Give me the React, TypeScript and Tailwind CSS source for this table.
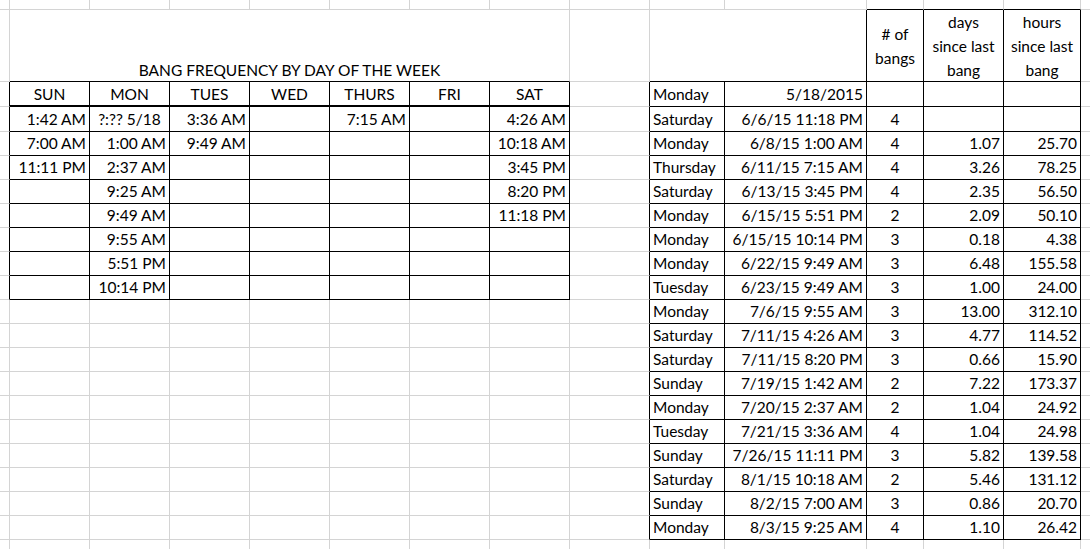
import React from "react";

type Align = "l" | "r" | "c";
type Content = { text: React.ReactNode; align: Align; span?: number; header?: boolean };

const NCOLS = 15;
const NROWS = 22;

const leftDays: string[][] = [
  ["1:42 AM", "7:00 AM", "11:11 PM"],
  ["?:?? 5/18", "1:00 AM", "2:37 AM", "9:25 AM", "9:49 AM", "9:55 AM", "5:51 PM", "10:14 PM"],
  ["3:36 AM", "9:49 AM"],
  [],
  ["7:15 AM"],
  [],
  ["4:26 AM", "10:18 AM", "3:45 PM", "8:20 PM", "11:18 PM"],
];
const dayHeads = ["SUN", "MON", "TUES", "WED", "THURS", "FRI", "SAT"];

const rightRows: string[][] = [
  ["Saturday", "6/6/15 11:18 PM", "4", "", ""],
  ["Monday", "6/8/15 1:00 AM", "4", "1.07", "25.70"],
  ["Thursday", "6/11/15 7:15 AM", "4", "3.26", "78.25"],
  ["Saturday", "6/13/15 3:45 PM", "4", "2.35", "56.50"],
  ["Monday", "6/15/15 5:51 PM", "2", "2.09", "50.10"],
  ["Monday", "6/15/15 10:14 PM", "3", "0.18", "4.38"],
  ["Monday", "6/22/15 9:49 AM", "3", "6.48", "155.58"],
  ["Tuesday", "6/23/15 9:49 AM", "3", "1.00", "24.00"],
  ["Monday", "7/6/15 9:55 AM", "3", "13.00", "312.10"],
  ["Saturday", "7/11/15 4:26 AM", "3", "4.77", "114.52"],
  ["Saturday", "7/11/15 8:20 PM", "3", "0.66", "15.90"],
  ["Sunday", "7/19/15 1:42 AM", "2", "7.22", "173.37"],
  ["Monday", "7/20/15 2:37 AM", "2", "1.04", "24.92"],
  ["Tuesday", "7/21/15 3:36 AM", "4", "1.04", "24.98"],
  ["Sunday", "7/26/15 11:11 PM", "3", "5.82", "139.58"],
  ["Saturday", "8/1/15 10:18 AM", "2", "5.46", "131.12"],
  ["Sunday", "8/2/15 7:00 AM", "3", "0.86", "20.70"],
  ["Monday", "8/3/15 9:25 AM", "4", "1.10", "26.42"],
];

function buildContent(): (Content | null | undefined)[][] {
  const m: (Content | null | undefined)[][] = Array.from({ length: NROWS }, () =>
    Array.from({ length: NCOLS }, () => undefined)
  );
  m[1][1] = { text: "BANG FREQUENCY BY DAY OF THE WEEK", align: "c", span: 7 };
  for (let c = 2; c <= 7; c++) m[1][c] = null;
  m[1][9] = { text: "", align: "l", span: 2 };
  m[1][10] = null;
  m[1][11] = { text: <>#&nbsp;of<br />bangs</>, align: "c", header: true };
  m[1][12] = { text: <>days<br />since last<br />bang</>, align: "c", header: true };
  m[1][13] = { text: <>hours<br />since last<br />bang</>, align: "c", header: true };
  dayHeads.forEach((d, i) => (m[2][1 + i] = { text: d, align: "c" }));
  leftDays.forEach((list, i) =>
    list.forEach((t, j) => (m[3 + j][1 + i] = { text: t, align: t.startsWith("?") ? "c" : "r" }))
  );
  m[2][9] = { text: "Monday", align: "l" };
  m[2][10] = { text: "5/18/2015", align: "r" };
  rightRows.forEach((row, i) => {
    const r = 3 + i;
    m[r][9] = { text: row[0], align: "l" };
    m[r][10] = { text: row[1], align: "r" };
    m[r][11] = { text: row[2], align: "c" };
    m[r][12] = { text: row[3], align: "r" };
    m[r][13] = { text: row[4], align: "r" };
  });
  return m;
}

function vBlack(r: number, c: number): boolean {
  if (r >= 2 && r <= 10 && c >= 0 && c <= 7) return true;
  if (r >= 2 && r <= 20 && c >= 8 && c <= 13) return true;
  if (r === 1 && c >= 10 && c <= 13) return true;
  return false;
}
function hBlack(r: number, c: number): boolean {
  if (c >= 1 && c <= 7 && r >= 1 && r <= 10) return true;
  if (c >= 9 && c <= 13 && r >= 1 && r <= 20) return true;
  if (c >= 11 && c <= 13 && r === 0) return true;
  return false;
}

export default function App() {
  const m = buildContent();
  const cells: React.ReactNode[] = [];
  for (let r = 0; r < NROWS; r++) {
    for (let c = 0; c < NCOLS; c++) {
      const ct = m[r][c];
      if (ct === null) continue;
      const span = ct?.span ?? 1;
      const lastC = c + span - 1;
      const rb =
        lastC === NCOLS - 1
          ? ""
          : vBlack(r, lastC)
          ? "border-r border-r-black"
          : "border-r border-r-[#d4d4d4]";
      const thick = r === 2 && c >= 1 && c <= 7;
      const bb =
        r === NROWS - 1
          ? ""
          : thick
          ? "border-b-2 border-b-black"
          : hBlack(r, c)
          ? "border-b border-b-black"
          : "border-b border-b-[#d4d4d4]";
      const spanCls = span === 7 ? "col-span-7" : span === 2 ? "col-span-2" : "";
      const pb = thick || r === 1 ? "pb-[1px]" : "pb-[2px]";
      let inner: React.ReactNode = null;
      let alignCls = "items-end justify-start pl-[3px]";
      if (ct) {
        if (ct.header) {
          alignCls = "items-center justify-center text-center leading-[24px]";
        } else if (ct.align === "r") {
          alignCls = `items-end justify-end pr-[3px] leading-[20px] ${pb}`;
        } else if (ct.align === "c") {
          alignCls = `items-end justify-center leading-[20px] ${pb}`;
        } else {
          alignCls = `items-end justify-start pl-[3px] leading-[20px] ${pb}`;
        }
        inner = <span className="whitespace-nowrap">{ct.text}</span>;
      }
      cells.push(
        <div key={`${r}-${c}`} className={`flex min-w-0 overflow-visible ${rb} ${bb} ${spanCls} ${alignCls}`}>
          {inner}
        </div>
      );
    }
  }
  return (
    <div className="w-[1090px] h-[549px] overflow-hidden bg-white text-black font-[Lato,sans-serif] text-[15.5px]">
      <div className="grid h-full grid-cols-[10px_80px_80px_80px_80px_80px_80px_80px_80px_75px_142px_57px_80px_77px_1fr] grid-rows-[10px_72px_25px_25px_repeat(17,24px)_1fr]">
        {cells}
      </div>
    </div>
  );
}
